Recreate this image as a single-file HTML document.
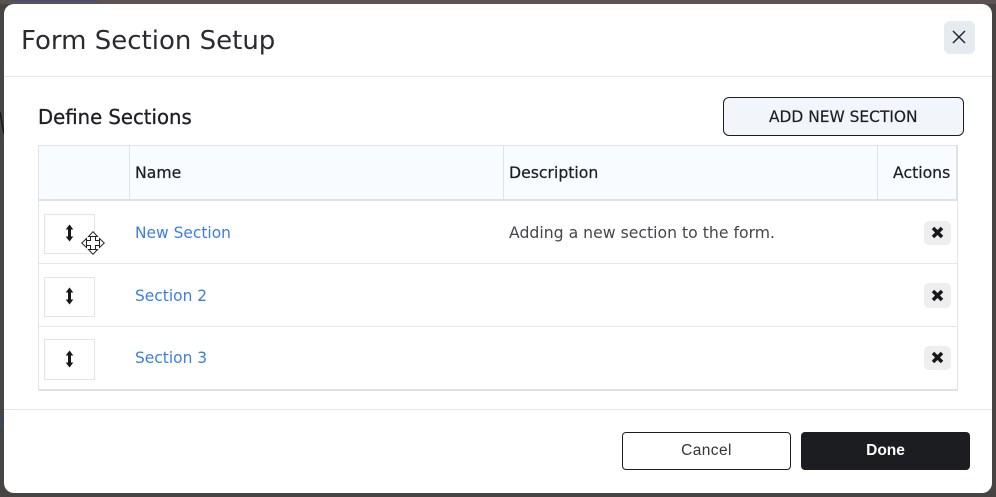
<!DOCTYPE html>
<html><head><meta charset="utf-8"><style>
html,body{margin:0;padding:0;width:996px;height:497px;overflow:hidden;background:#484444;font-family:"DejaVu Sans","Liberation Sans",sans-serif}
.a{position:absolute;box-sizing:border-box;white-space:nowrap}
.t{line-height:20px;color:#1d1f24;transform-origin:0 50%}
.link{font-size:16px;transform:scaleX(.965)}
.h{font-size:16px;transform:scaleX(.98);-webkit-text-stroke:.25px #1d1f24}
.hb{border:1px solid #e4e4e4;background:#fff;left:44px;width:51px}
.x{left:924px;width:27px;height:24px;background:#eeeeee;border-radius:5px}
</style></head><body>
<div class="a" style="left:0;top:0;width:996px;height:4px;background:#5c5252"></div>
<div class="a" style="left:12px;top:0;width:86px;height:1px;background:#3a5288"></div>
<svg class="a" style="left:0;top:112px" width="5" height="26" viewBox="0 0 5 26"><path d="M0 0L4 22" stroke="#181818" stroke-width="1.500" fill="none"/></svg>
<div class="a" style="left:0;top:417px;width:3px;height:10px;border:1px solid #2c4a86;border-right:0"></div>
<div class="a" style="left:4px;top:4px;width:988px;height:489px;background:#fff;border-radius:10px"></div>

<div class="a t" style="left:21px;top:26px;font-size:26px;line-height:30px;color:#2a2c31">Form Section Setup</div>
<div class="a" style="left:944px;top:21px;width:31px;height:33px;background:#e6eaf1;border-radius:6px"></div>
<svg class="a" style="left:952px;top:30px" width="14" height="14" viewBox="0 0 14 14"><path d="M1 1L13 13M13 1L1 13" stroke="#24262b" stroke-width="1.500" fill="none"/></svg>
<div class="a" style="left:4px;top:76px;width:988px;height:1px;background:#e3e5e8"></div>

<div class="a t" style="left:38px;top:106px;font-size:20px;line-height:22px;-webkit-text-stroke:.3px #1d1f24;transform:scaleX(.983)">Define Sections</div>
<div class="a" style="left:723px;top:97px;width:241px;height:39px;background:#f2f6fa;border:1px solid #1c1e22;border-radius:6px"></div>
<div class="a t" style="left:769px;top:107px;font-size:16px;transform:scaleX(.964);-webkit-text-stroke:.2px #1d1f24">ADD NEW SECTION</div>

<div class="a" style="left:38px;top:145px;width:920px;height:246px;border:1px solid #e1e3e6;border-bottom:2px solid #e1e1e1;background:#fff"></div>
<div class="a" style="left:39px;top:146px;width:918px;height:53px;background:#f8fbff"></div>
<div class="a" style="left:39px;top:199px;width:918px;height:2px;background:#dfe1e3"></div>
<div class="a" style="left:129px;top:146px;width:1px;height:53px;background:#dfe2e6"></div>
<div class="a" style="left:503px;top:146px;width:1px;height:53px;background:#dfe2e6"></div>
<div class="a" style="left:877px;top:146px;width:1px;height:53px;background:#dfe2e6"></div>
<div class="a" style="left:956px;top:146px;width:2px;height:54px;background:#dfe1e3"></div>
<div class="a" style="left:39px;top:263px;width:918px;height:1px;background:#e8e8e8"></div>
<div class="a" style="left:39px;top:326px;width:918px;height:1px;background:#e8e8e8"></div>

<div class="a t h" style="left:135px;top:163px">Name</div>
<div class="a t h" style="left:509px;top:163px">Description</div>
<div class="a t h" style="left:893px;top:163px">Actions</div>

<div class="a hb" style="top:214px;height:40px"></div>
<div class="a hb" style="top:277px;height:40px"></div>
<div class="a hb" style="top:339px;height:41px"></div>
<svg class="a" style="left:65px;top:224px" width="9" height="18" viewBox="0 0 9 18"><path d="M4.500 0.500L8.300 5.500H6V12.500H8.300L4.500 17.500L0.700 12.500H3V5.500H0.700Z" fill="#15171b"/></svg>
<svg class="a" style="left:65px;top:287px" width="9" height="18" viewBox="0 0 9 18"><path d="M4.500 0.500L8.300 5.500H6V12.500H8.300L4.500 17.500L0.700 12.500H3V5.500H0.700Z" fill="#15171b"/></svg>
<svg class="a" style="left:65px;top:350px" width="9" height="18" viewBox="0 0 9 18"><path d="M4.500 0.500L8.300 5.500H6V12.500H8.300L4.500 17.500L0.700 12.500H3V5.500H0.700Z" fill="#15171b"/></svg>

<div class="a t link" style="left:135px;top:223px;color:#3b7cf0">New Section</div>
<div class="a t link" style="left:135px;top:286px;color:#3b7cf0">Section 2</div>
<div class="a t link" style="left:135px;top:348px;color:#3b7cf0">Section 3</div>
<div class="a t" style="left:509px;top:223px;font-size:16px;color:#44464b;transform:scaleX(.98)">Adding a new section to the form.</div>

<svg class="a" style="left:81px;top:231px" width="24" height="24" viewBox="0 0 24 24"><path d="M12 .7L16.500 5.500H14.500V9.500H18.500V7.500L23.300 12L18.500 16.500V14.500H14.500V18.500H16.500L12 23.300L7.500 18.500H9.500V14.500H5.500V16.500L.7 12L5.500 7.500V9.500H9.500V5.500H7.500Z" fill="#fff" stroke="#222" stroke-width="1"/><path d="M9.500 5.500H14.500M9.500 18.500H14.500M5.500 9.500V14.500M18.500 9.500V14.500" stroke="#222" stroke-width="1" fill="none"/></svg>

<div class="a x" style="top:221px"></div>
<div class="a x" style="top:283px;height:25px"></div>
<div class="a x" style="top:346px"></div>
<svg class="a" style="left:931px;top:226px" width="13" height="13" viewBox="0 0 13 13"><path d="M2 2L11 11M11 2L2 11" stroke="#17191d" stroke-width="3.500" fill="none"/></svg>
<svg class="a" style="left:931px;top:289px" width="13" height="13" viewBox="0 0 13 13"><path d="M2 2L11 11M11 2L2 11" stroke="#17191d" stroke-width="3.500" fill="none"/></svg>
<svg class="a" style="left:931px;top:351px" width="13" height="13" viewBox="0 0 13 13"><path d="M2 2L11 11M11 2L2 11" stroke="#17191d" stroke-width="3.500" fill="none"/></svg>

<div class="a" style="left:4px;top:409px;width:988px;height:1px;background:#e3e5e8"></div>
<div class="a" style="left:622px;top:432px;width:169px;height:38px;border:1px solid #1c1e22;border-radius:4px;background:#fff;text-align:center;font:15.500px/36px 'Liberation Sans',sans-serif;letter-spacing:.4px;color:#33353a">Cancel</div>
<div class="a" style="left:801px;top:432px;width:169px;height:38px;border-radius:4px;background:#1c1d21;text-align:center;font:bold 15.500px/38px 'Liberation Sans',sans-serif;color:#fff">Done</div>
</body></html>
